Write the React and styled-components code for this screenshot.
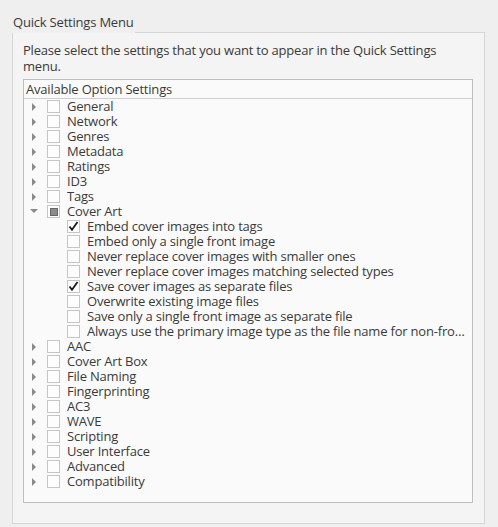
import React from 'react';
import styled, { createGlobalStyle } from 'styled-components';

const GlobalStyle = createGlobalStyle`
  body {
    margin: 0;
    background: #efefef;
    font-family: "Open Sans", "DejaVu Sans", sans-serif;
    font-size: 13px;
    letter-spacing: -0.2px;
    color: #3a3a3a;
  }
`;

const Page = styled.div`
  padding: 13px 13px 2px 12px;
  width: 473px;
`;

const LegendRow = styled.div`
  display: flex;
  align-items: flex-end;
  height: 20px;
`;

const Legend = styled.div`
  padding: 1px 1px 0;
  line-height: 16px;
  height: 20px;
  box-sizing: border-box;
`;

const LegendLine = styled.div`
  flex: 1;
  border-top: 1px solid #d6d6d6;
  border-right: 1px solid #d6d6d6;
  height: 0;
`;

const Group = styled.div`
  background: #f4f4f4;
  border: 1px solid #d6d6d6;
  border-top: none;
  padding: 9px 11px 20px 10px;
`;

const Description = styled.p`
  margin: 0 0 5px;
  line-height: 16px;
`;

const Tree = styled.div`
  background: #fafafa;
  border: 1px solid #bdbdbd;
  height: 422px;
  overflow: hidden;
`;

const TreeHeader = styled.div`
  height: 18px;
  line-height: 18px;
  padding-left: 2px;
  border-bottom: 1px solid #cfcfcf;
`;

const Row = styled.div`
  display: flex;
  align-items: center;
  height: 15px;
  padding-left: ${({ indent }) => indent}px;
`;

const Arrow = styled.span`
  width: 20px;
  height: 15px;
  display: flex;
  align-items: center;
  justify-content: center;
  flex-shrink: 0;
`;

const Box = styled.span`
  width: 11px;
  height: 11px;
  border: 1px solid #c6c6c6;
  background: #fdfdfd;
  display: flex;
  align-items: center;
  justify-content: center;
  flex-shrink: 0;
  margin-left: 3px;
`;

const Partial = styled.span`
  width: 8px;
  height: 8px;
  background: #8c8c8c;
  border: 1px solid #666;
  box-sizing: border-box;
`;

const Label = styled.span`
  margin: -1px 0 -1px 7px;
  padding: 1px 3px 1px 0;
  line-height: 15px;
  white-space: nowrap;
  overflow: hidden;
  text-overflow: ellipsis;
  min-width: 0;
`;

const Closed = () => (
  <svg width="5" height="8" viewBox="0 0 5 8">
    <path d="M0 0 L4 4 L0 8 Z" fill="#8a8a8a" />
  </svg>
);

const Open = () => (
  <svg width="8" height="5" viewBox="0 0 8 5">
    <path d="M0 0 L8 0 L4 4 Z" fill="#8a8a8a" />
  </svg>
);

const Check = () => (
  <svg width="11" height="11" viewBox="0 0 11 11">
    <path d="M1.5 5.5 L4 8.8 L9.5 1" stroke="#1a1a1a" strokeWidth="1.8" fill="none" />
  </svg>
);

const coverArt = [
  ['Embed cover images into tags', true],
  ['Embed only a single front image', false],
  ['Never replace cover images with smaller ones', false],
  ['Never replace cover images matching selected types', false],
  ['Save cover images as separate files', true],
  ['Overwrite existing image files', false],
  ['Save only a single front image as separate file', false],
  ['Always use the primary image type as the file name for non-front images', false],
];

const before = ['General', 'Network', 'Genres', 'Metadata', 'Ratings', 'ID3', 'Tags'];
const after = [
  'AAC', 'Cover Art Box', 'File Naming', 'Fingerprinting', 'AC3', 'WAVE',
  'Scripting', 'User Interface', 'Advanced', 'Compatibility',
];

function TopRow({ name, open, partial }) {
  return (
    <Row indent={0}>
      <Arrow>{open ? <Open /> : <Closed />}</Arrow>
      <Box>{partial && <Partial />}</Box>
      <Label>{name}</Label>
    </Row>
  );
}

export default function App() {
  return (
    <>
      <GlobalStyle />
      <Page>
        <LegendRow>
          <Legend>Quick Settings Menu</Legend>
          <LegendLine />
        </LegendRow>
        <Group>
          <Description>
            Please select the settings that you want to appear in the Quick Settings menu.
          </Description>
          <Tree>
            <TreeHeader>Available Option Settings</TreeHeader>
            {before.map(n => <TopRow key={n} name={n} />)}
            <TopRow name="Cover Art" open partial />
            {coverArt.map(([n, on]) => (
              <Row indent={40} key={n}>
                <Box>{on && <Check />}</Box>
                <Label>{n}</Label>
              </Row>
            ))}
            {after.map(n => <TopRow key={n} name={n} />)}
          </Tree>
        </Group>
      </Page>
    </>
  );
}
